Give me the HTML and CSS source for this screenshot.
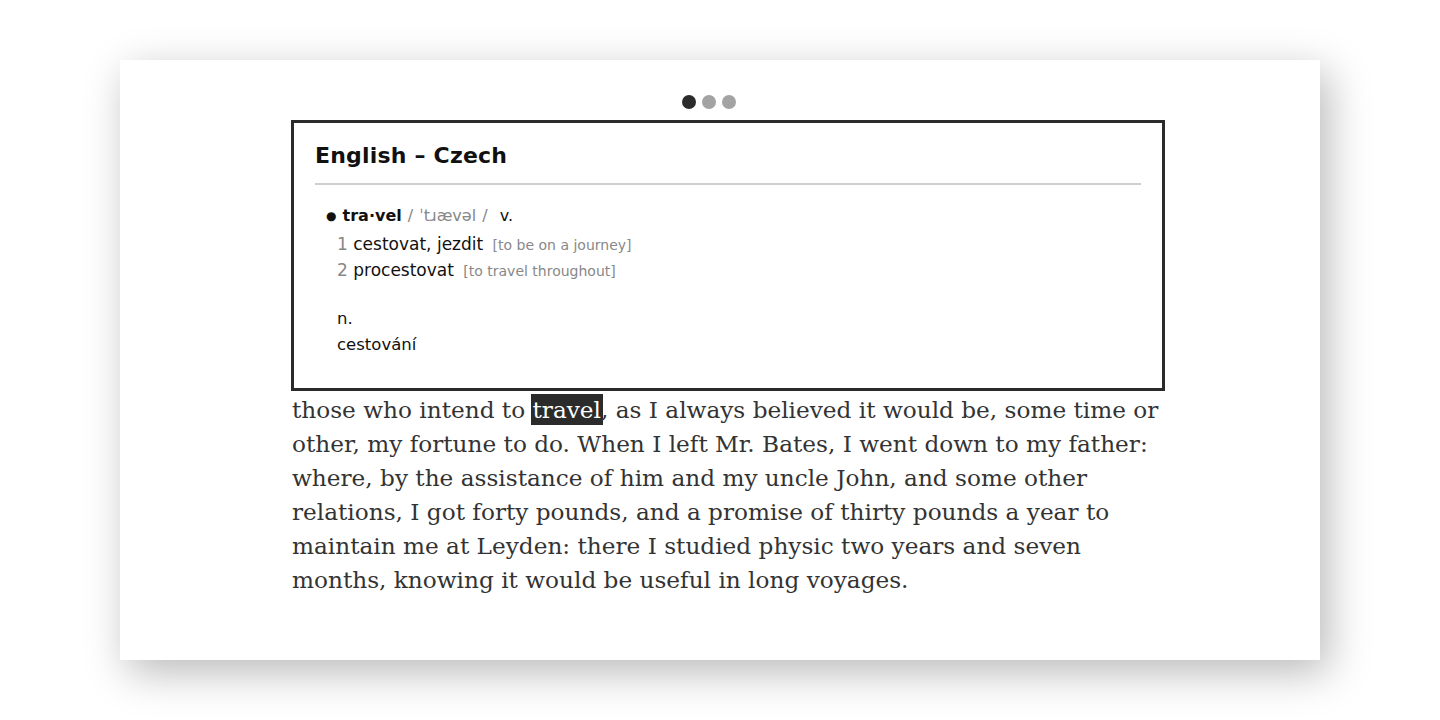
FILE: index.html
```html
<!DOCTYPE html>
<html>
<head>
<meta charset="utf-8">
<link rel="stylesheet" href="styles.css">
</head>
<body>
<div class="card">
  <div class="content">
    <div class="dots">
      <span class="dot dot-active"></span>
      <span class="dot"></span>
      <span class="dot"></span>
    </div>
    <div class="popup">
      <div class="popup-title">English – Czech</div>
      <div class="entry">
        <div class="headline"><span class="bullet">●</span> <span class="hw">tra·vel</span> <span class="pron">/ ˈtɹævəl /</span> <span class="pos">v.</span></div>
        <div class="sense first"><span class="num">1</span> <span class="tr">cestovat, jezdit</span> <span class="gloss">[to be on a journey]</span></div>
        <div class="sense"><span class="num">2</span> <span class="tr">procestovat</span> <span class="gloss">[to travel throughout]</span></div>
        <div class="noun">
          <div class="pos">n.</div>
          <div class="tr2">cestování</div>
        </div>
      </div>
    </div>
    <p class="text">those who intend to <span class="hl">travel</span>, as I always believed it would be, some time or other, my fortune to do. When I left Mr. Bates, I went down to my father: where, by the assistance of him and my uncle John, and some other relations, I got forty pounds, and a promise of thirty pounds a year to maintain me at Leyden: there I studied physic two years and seven months, knowing it would be useful in long voyages.</p>
  </div>
</div>
</body>
</html>
```

FILE: styles.css
```css
html, body {
  margin: 0;
  padding: 0;
  background: #fff;
}
body {
  width: 1440px;
  height: 720px;
  overflow: hidden;
  padding-top: 60px;
  box-sizing: border-box;
}
.card {
  width: 1200px;
  height: 600px;
  margin-left: 120px;
  background: #fff;
  box-shadow: 8px 12px 40px rgba(0, 0, 0, 0.28);
  box-sizing: border-box;
  padding: 35px 0 0 171px;
}
.content {
  width: 874px;
}
.dots {
  display: flex;
  gap: 6px;
  padding-left: 391px;
  height: 14px;
  margin-bottom: 11px;
}
.dot {
  width: 14px;
  height: 14px;
  border-radius: 50%;
  background: #a3a3a3;
}
.dot-active {
  background: #2b2b2b;
}
.popup {
  border: 3px solid #2b2b2b;
  height: 271px;
  box-sizing: border-box;
  padding: 18px 21px 0 21px;
  font-family: "DejaVu Sans", sans-serif;
  color: #111;
}
.popup-title {
  font-size: 22px;
  font-weight: bold;
  line-height: 30px;
  padding-bottom: 12px;
  border-bottom: 2px solid #cfcfcf;
  letter-spacing: 0.2px;
}
.entry {
  padding: 18px 0 0 11px;
  font-size: 16px;
}
.headline {
  line-height: 26px;
  word-spacing: 1px;
}
.bullet {
  font-size: 12px;
  position: relative;
  top: -1px;
}
.hw {
  font-weight: bold;
}
.pron {
  color: #888;
  margin-right: 6px;
}
.pos {
  color: #111;
}
.sense {
  padding-left: 11px;
  height: 26px;
  line-height: 26px;
  font-size: 17px;
}
.sense.first {
  margin-top: 1px;
}
.num {
  color: #888;
}
.gloss {
  color: #888;
  font-size: 14px;
  margin-left: 4px;
}
.noun {
  padding-left: 11px;
  margin-top: 23px;
}
.noun .pos, .noun .tr2 {
  line-height: 26px;
  font-size: 16.5px;
}
.text {
  margin: 2px 0 0 1px;
  font-family: "DejaVu Serif", serif;
  font-size: 23.2px;
  line-height: 34px;
  color: #333;
}
.hl {
  background: #2b2b2b;
  color: #fff;
  box-shadow: 0 0 0 2px #2b2b2b;
}
```
